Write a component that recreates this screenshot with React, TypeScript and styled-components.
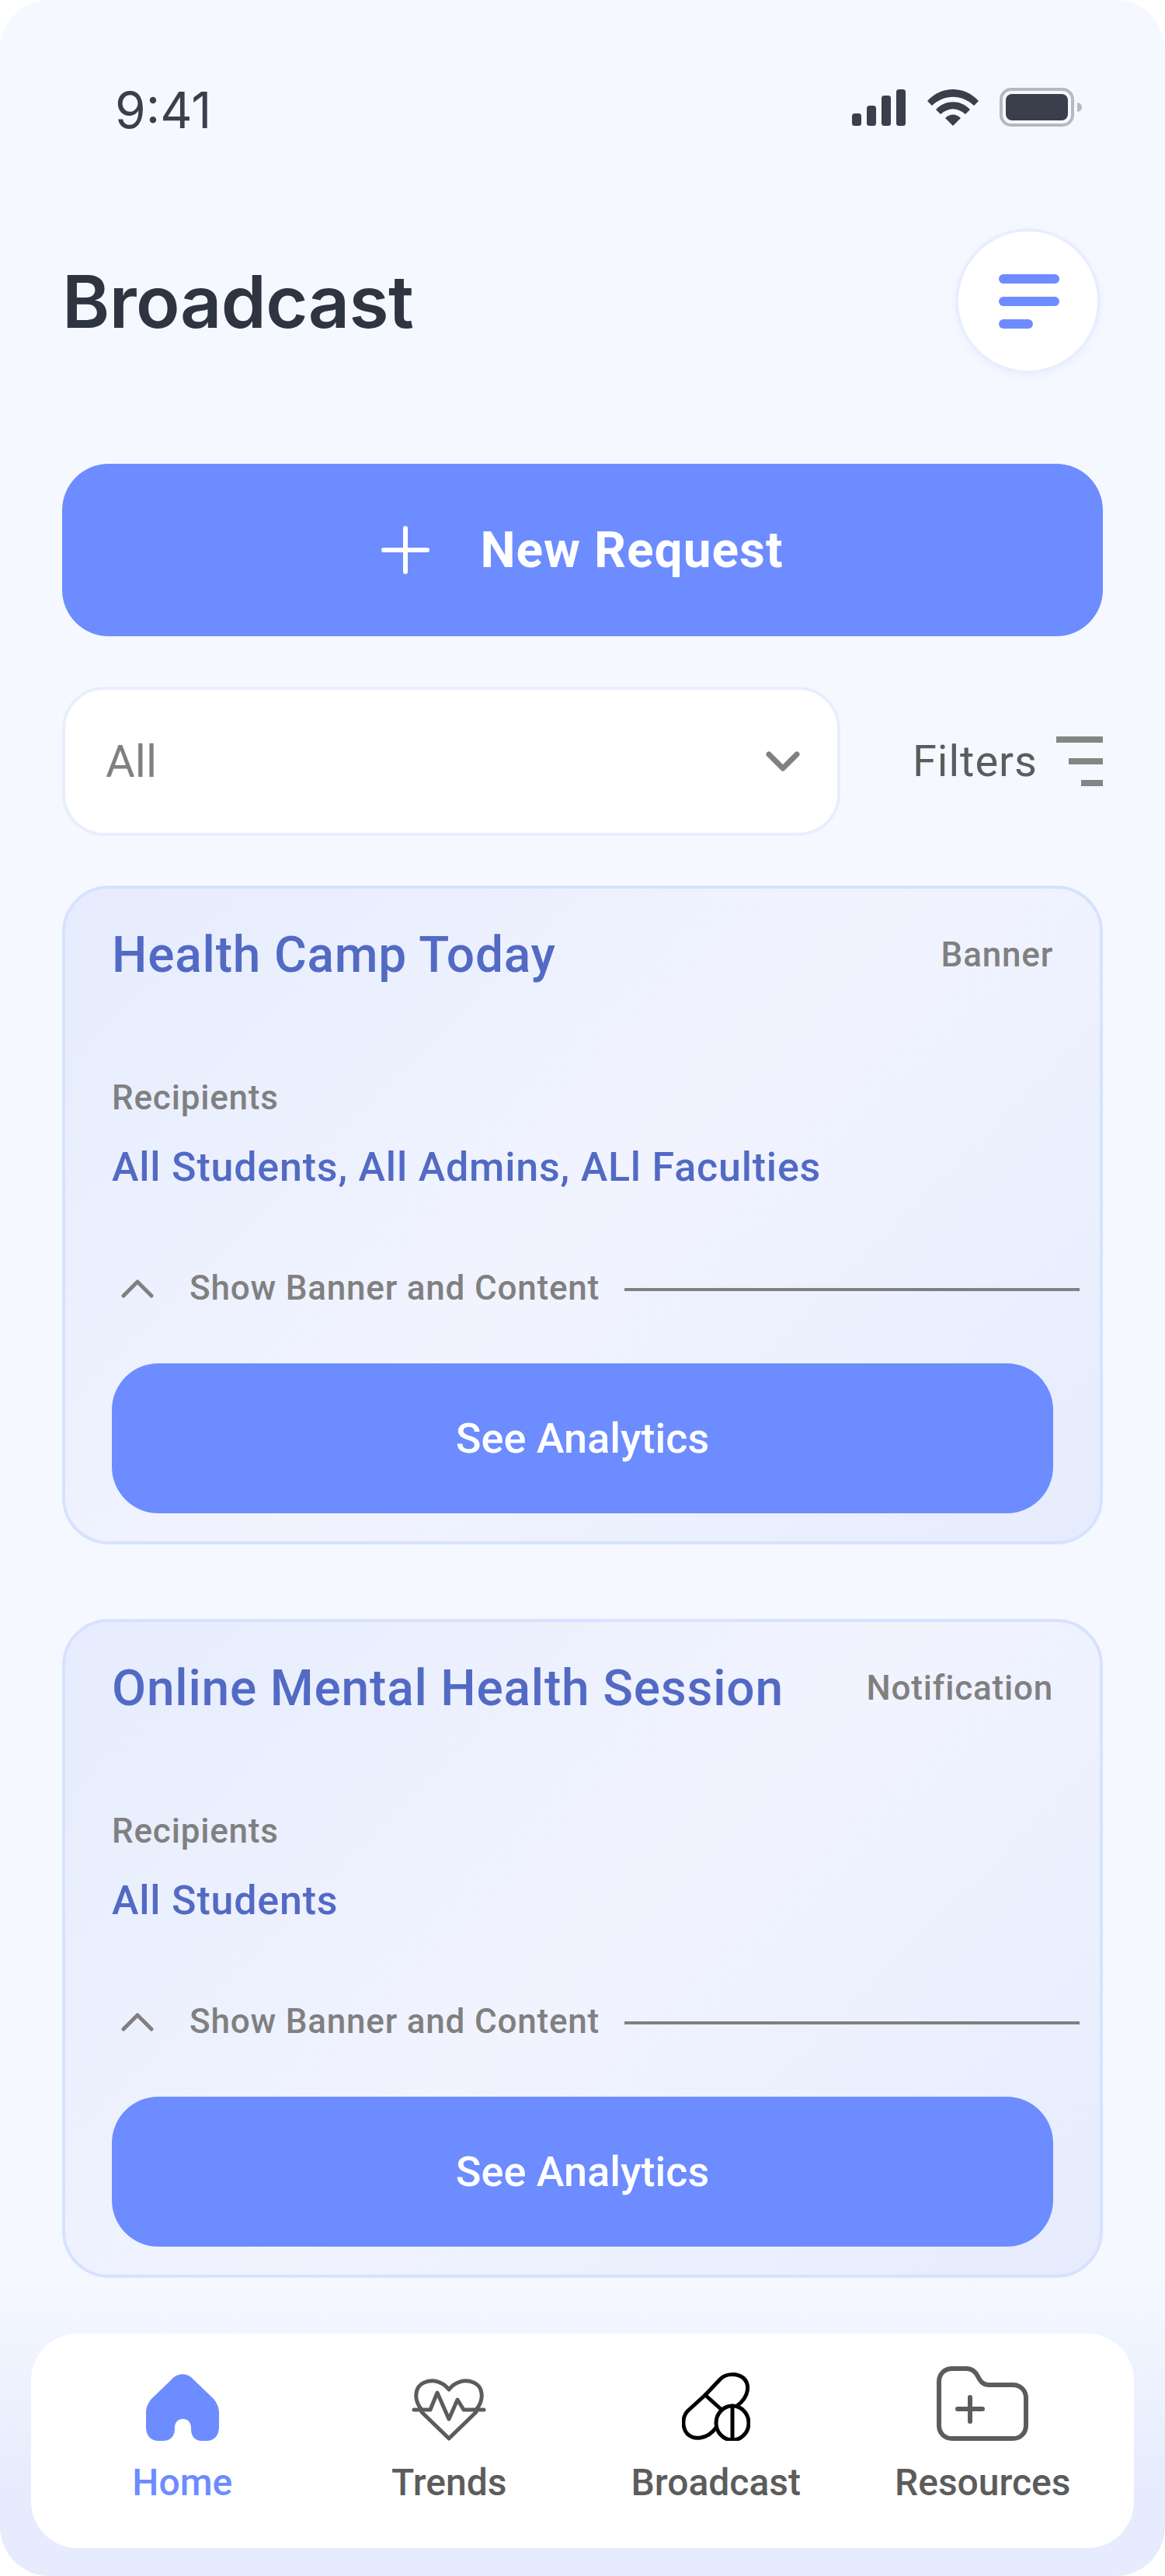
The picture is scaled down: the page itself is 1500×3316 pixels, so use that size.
import styled, { createGlobalStyle } from "styled-components";

const GlobalStyle = createGlobalStyle`
  html, body {
    margin: 0;
    padding: 0;
    background: #ffffff;
  }
  * {
    box-sizing: border-box;
  }
`;

interface BroadcastItem {
  title: string;
  kind: string;
  recipients: string;
}

const items: BroadcastItem[] = [
  {
    title: "Health Camp Today",
    kind: "Banner",
    recipients: "All Students, All Admins, ALl Faculties",
  },
  {
    title: "Online Mental Health Session",
    kind: "Notification",
    recipients: "All Students",
  },
];

const SignalIcon = () => (
  <svg width="70" height="47" viewBox="0 0 70 47" fill="#3a3f4b">
    <rect x="0" y="31" width="12" height="16" rx="3.5" />
    <rect x="19" y="21" width="12" height="26" rx="3.5" />
    <rect x="38" y="8" width="12" height="39" rx="3.5" />
    <rect x="57" y="0" width="12" height="47" rx="3.5" />
  </svg>
);

const WifiIcon = () => (
  <svg width="66" height="47" viewBox="0 0 66 47" fill="#3a3f4b">
    <path d="M0 15 C18 -5 48 -5 66 15 L60 21 C44 6 22 6 6 21 Z" />
    <path d="M11 26 C23 13 43 13 55 26 L49 32 C38 23 28 23 17 32 Z" />
    <path d="M23 37 C29 31 37 31 43 37 L33 47 Z" />
  </svg>
);

const BatteryIcon = () => (
  <svg width="107" height="50" viewBox="0 0 107 50">
    <rect x="2" y="2" width="92" height="46" rx="13" fill="none" stroke="#b7b9c0" strokeWidth="4" />
    <rect x="8" y="8" width="80" height="34" rx="8" fill="#3a3f4b" />
    <path d="M100 19 C105 20 106 23 106 25 C106 27 105 30 100 31 Z" fill="#b7b9c0" />
  </svg>
);

const PlusIcon = () => (
  <svg width="62" height="62" viewBox="0 0 62 62" stroke="#ffffff" strokeWidth="6" strokeLinecap="round">
    <path d="M31 3 V59 M3 31 H59" />
  </svg>
);

const ChevronDown = () => (
  <svg width="44" height="28" viewBox="0 0 44 28" fill="none" stroke="#808080" strokeWidth="7" strokeLinecap="round" strokeLinejoin="round">
    <path d="M4 5 L22 23 L40 5" />
  </svg>
);

const ChevronUp = () => (
  <svg width="42" height="26" viewBox="0 0 42 26" fill="none" stroke="#808080" strokeWidth="5" strokeLinecap="round" strokeLinejoin="round">
    <path d="M3 23 L21 5 L39 23" />
  </svg>
);

const HomeIcon = () => (
  <svg width="94" height="86" viewBox="0 0 94 86" fill="#6c8cff">
    <path d="M33 7 C40 -2 54 -2 61 7 L87 32 C92 38 94 44 94 50 V68 C94 79 88 86 78 86 H72 C63 86 58 80 58 71 V69 C58 54 37 54 37 69 V71 C37 80 31 86 22 86 H16 C6 86 0 79 0 68 V50 C0 44 2 38 7 32 Z" />
  </svg>
);

const HeartIcon = () => (
  <svg width="96" height="80" viewBox="0 0 96 80" fill="none" stroke="#5c5c5c" strokeWidth="5" strokeLinecap="round" strokeLinejoin="round">
    <path d="M13 40 C2 27 4 10 16 5 C28 0 40 4 48 14 C56 4 68 0 80 5 C92 10 94 27 83 40" />
    <path d="M13 43 L48 77 L83 43" />
    <path d="M3 40 H24 L33 18 L48 52 L59 27 L67 40 H93" />
  </svg>
);

const PillsIcon = () => (
  <svg width="88" height="88" viewBox="0 0 88 88" fill="none" stroke="#000000" strokeWidth="5" strokeLinecap="round" strokeLinejoin="round">
    <path d="M30 29 L50 8 C57 1 71 1 79 7 C87 14 88 30 71 43" />
    <path d="M30 29 L50 47" />
    <path d="M30 29 L8 49 C0 57 0 71 7 79 C15 87 32 87 44 71" />
    <ellipse cx="65" cy="65" rx="21" ry="22" />
    <path d="M65 43 V87" />
  </svg>
);

const FolderIcon = () => (
  <svg width="118" height="96" viewBox="0 0 118 96" fill="none" stroke="#5c5c5c" strokeWidth="6" strokeLinecap="round" strokeLinejoin="round">
    <path d="M3 20 C3 10 10 3 20 3 H38 C46 3 50 7 53 13 C56 19 59 24 68 24 H98 C108 24 115 31 115 41 V76 C115 86 108 93 98 93 H20 C10 93 3 86 3 76 Z" />
    <path d="M27 55 H59 M43 40 V71" />
  </svg>
);

const BroadcastCard = ({ title, kind, recipients }: BroadcastItem) => (
  <Card>
    <CardHead>
      <CardTitle>{title}</CardTitle>
      <CardKind>{kind}</CardKind>
    </CardHead>
    <Label>Recipients</Label>
    <RecipientList>{recipients}</RecipientList>
    <ShowRow>
      <ChevronUp />
      <ShowText>Show Banner and Content</ShowText>
      <ShowLine />
    </ShowRow>
    <AnalyticsButton>See Analytics</AnalyticsButton>
  </Card>
);

const App = () => {
  return (
    <Phone>
      <GlobalStyle />
      <StatusBar>
        <Clock>9:41</Clock>
        <StatusIcons>
          <SignalIcon />
          <WifiIcon />
          <BatteryIcon />
        </StatusIcons>
      </StatusBar>

      <Content>
        <Header>
          <PageTitle>Broadcast</PageTitle>
          <MenuButton>
            <MenuBar $width={78} />
            <MenuBar $width={78} />
            <MenuBar $width={44} />
          </MenuButton>
        </Header>

        <NewRequest>
          <PlusIcon />
          New Request
        </NewRequest>

        <FilterRow>
          <SelectBox>
            All
            <ChevronDown />
          </SelectBox>
          <FilterToggle>
            Filters
            <FilterLines>
              <FilterLine $width={60} />
              <FilterLine $width={44} />
              <FilterLine $width={28} />
            </FilterLines>
          </FilterToggle>
        </FilterRow>

        <CardList>
          {items.map((item) => (
            <BroadcastCard key={item.title} {...item} />
          ))}
        </CardList>
      </Content>

      <Dock>
        <BottomNav>
          <NavItem $active>
            <NavIcon>
              <HomeIcon />
            </NavIcon>
            Home
          </NavItem>
          <NavItem>
            <NavIcon>
              <HeartIcon />
            </NavIcon>
            Trends
          </NavItem>
          <NavItem>
            <NavIcon>
              <PillsIcon />
            </NavIcon>
            Broadcast
          </NavItem>
          <NavItem>
            <NavIcon>
              <FolderIcon />
            </NavIcon>
            Resources
          </NavItem>
        </BottomNav>
      </Dock>
    </Phone>
  );
};

export default App;

// style
const Phone = styled.div`
  width: 1500px;
  height: 3316px;
  display: flex;
  flex-direction: column;
  overflow: hidden;
  border-radius: 64px;
  background: #f5f8ff;
  font-family: Roboto, "Liberation Sans", sans-serif;
`;
const StatusBar = styled.div`
  height: 293px;
  flex-shrink: 0;
  display: flex;
  justify-content: space-between;
  align-items: flex-start;
  padding: 115px 106px 0 148px;
`;
const Clock = styled.div`
  font-family: Inter, sans-serif;
  font-size: 64px;
  line-height: 54px;
  color: #3a3f4b;
`;
const StatusIcons = styled.div`
  display: flex;
  align-items: center;
  gap: 27px;
  margin-top: -2px;
`;
const Content = styled.div`
  padding: 0 80px;
`;
const Header = styled.div`
  display: flex;
  justify-content: space-between;
  align-items: center;
  height: 189px;
`;
const PageTitle = styled.h1`
  margin: 0;
  font-family: Inter, sans-serif;
  font-size: 93px;
  font-weight: 600;
  letter-spacing: -0.6px;
  color: #2f3441;
`;
const MenuButton = styled.div`
  width: 187px;
  height: 187px;
  margin-right: 3px;
  display: flex;
  flex-direction: column;
  justify-content: center;
  gap: 17px;
  padding-left: 52px;
  border: 4px solid #e8eefe;
  border-radius: 50%;
  background: #ffffff;
  box-shadow: 0 4px 10px rgba(108, 140, 255, 0.06);
`;
const MenuBar = styled.span<{ $width: number }>`
  display: block;
  width: ${({ $width }) => $width}px;
  height: 12px;
  border-radius: 6px;
  background: #6c8cff;
`;
const NewRequest = styled.div`
  height: 222px;
  margin-top: 115px;
  display: flex;
  align-items: center;
  justify-content: center;
  gap: 65px;
  border-radius: 60px;
  background: #6c8cff;
  color: #ffffff;
  font-size: 64px;
  font-weight: 700;
  letter-spacing: 1px;
`;
const FilterRow = styled.div`
  margin-top: 65px;
  display: flex;
  align-items: center;
  justify-content: space-between;
`;
const SelectBox = styled.div`
  width: 1002px;
  height: 192px;
  display: flex;
  align-items: center;
  justify-content: space-between;
  padding: 0 48px 0 52px;
  border: 4px solid #e8eefe;
  border-radius: 54px;
  background: #ffffff;
  color: #808080;
  font-size: 58px;
`;
const FilterToggle = styled.div`
  display: flex;
  align-items: center;
  gap: 24px;
  color: #5c5c5c;
  font-size: 56px;
  letter-spacing: 1px;
`;
const FilterLines = styled.div`
  display: flex;
  flex-direction: column;
  align-items: flex-end;
  gap: 20px;
`;
const FilterLine = styled.span<{ $width: number }>`
  display: block;
  width: ${({ $width }) => $width}px;
  height: 8px;
  background: #858585;
`;
const CardList = styled.div`
  margin-top: 64px;
  display: flex;
  flex-direction: column;
  gap: 96px;
`;
const Card = styled.div`
  height: 848px;
  padding: 45px 60px 36px;
  border: 4px solid #d6e2ff;
  border-radius: 60px;
  background: linear-gradient(135deg, #e6ecfd 0%, #f1f4ff 50%, #e6ecfd 100%);
`;
const CardHead = styled.div`
  display: flex;
  justify-content: space-between;
  align-items: center;
  height: 80px;
`;
const CardTitle = styled.div`
  font-size: 64px;
  font-weight: 500;
  letter-spacing: 0.8px;
  color: #526ac4;
`;
const CardKind = styled.div`
  font-size: 44px;
  font-weight: 500;
  letter-spacing: 0.8px;
  color: #808080;
`;
const Label = styled.div`
  margin-top: 119px;
  font-size: 44px;
  font-weight: 500;
  letter-spacing: 0.8px;
  line-height: 50px;
  color: #808080;
`;
const RecipientList = styled.div`
  margin-top: 34px;
  font-size: 52px;
  font-weight: 500;
  letter-spacing: 0.8px;
  line-height: 62px;
  color: #526ac4;
`;
const ShowRow = styled.div`
  margin-top: 99px;
  margin-right: -34px;
  padding-left: 12px;
  display: flex;
  align-items: center;
  height: 50px;
`;
const ShowText = styled.span`
  margin-left: 46px;
  font-size: 44px;
  font-weight: 500;
  letter-spacing: 0.8px;
  color: #808080;
`;
const ShowLine = styled.span`
  flex: 1;
  height: 4px;
  margin: 3px 0 0 32px;
  background: #808080;
`;
const AnalyticsButton = styled.div`
  height: 193px;
  margin-top: 72px;
  display: flex;
  align-items: center;
  justify-content: center;
  border-radius: 60px;
  background: #6c8cff;
  color: #ffffff;
  font-size: 54px;
  font-weight: 500;
`;
const Dock = styled.div`
  flex: 1;
  display: flex;
  align-items: flex-end;
  padding: 0 40px 36px;
  background: linear-gradient(180deg, #f5f8ff 0%, #e6ecfd 70%);
`;
const BottomNav = styled.nav`
  width: 100%;
  height: 276px;
  display: grid;
  grid-template-columns: repeat(4, 1fr);
  padding: 0 23px;
  border-radius: 60px;
  background: #ffffff;
`;
const NavItem = styled.div<{ $active?: boolean }>`
  display: flex;
  flex-direction: column;
  align-items: center;
  justify-content: flex-end;
  padding-bottom: 56px;
  font-size: 48px;
  font-weight: 500;
  line-height: 56px;
  color: ${({ $active }) => ($active ? "#6c8cff" : "#5c5c5c")};
`;
const NavIcon = styled.div`
  height: 96px;
  margin-bottom: 26px;
  display: flex;
  align-items: flex-end;
`;
